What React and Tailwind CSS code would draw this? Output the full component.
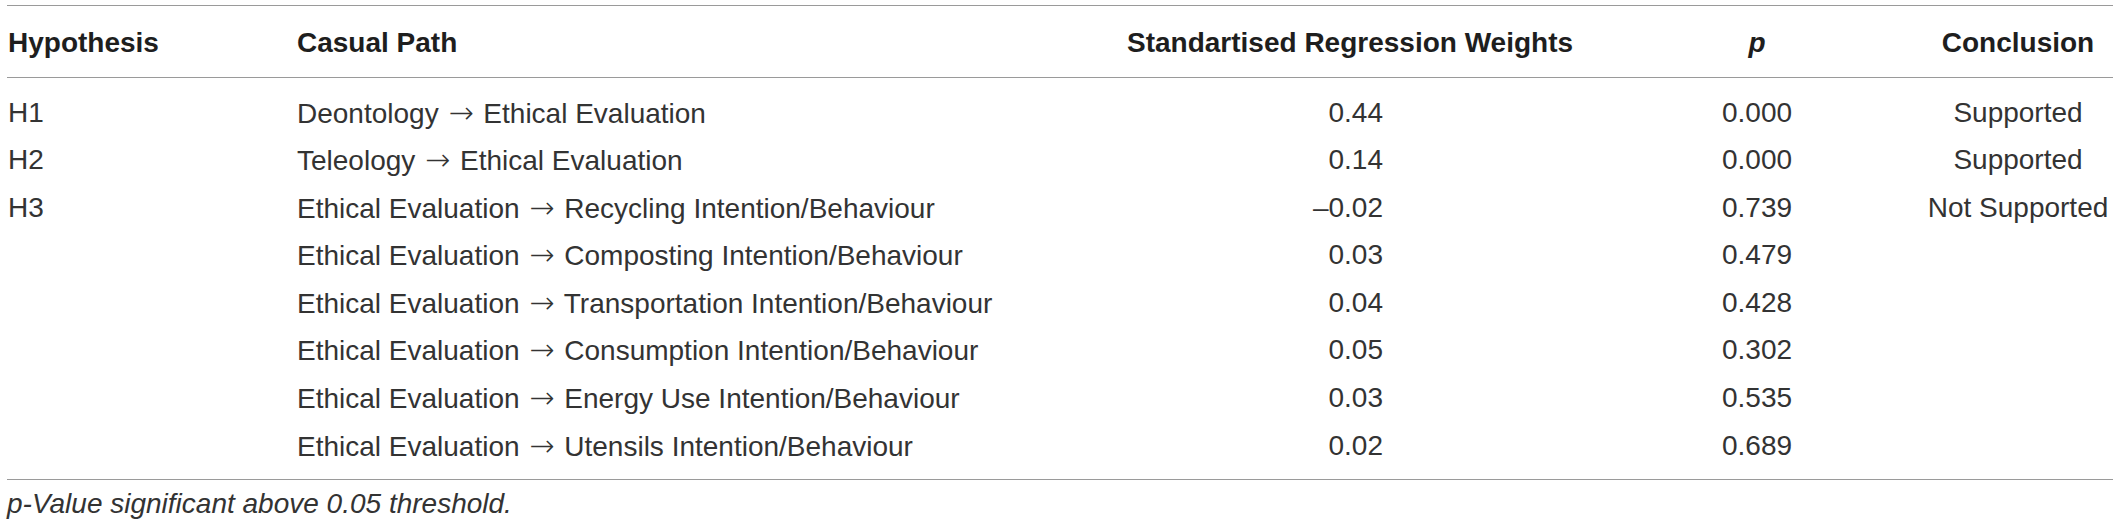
const rows = [
  ["H1", "Deontology", "Ethical Evaluation", "0.44", "0.000", "Supported"],
  ["H2", "Teleology", "Ethical Evaluation", "0.14", "0.000", "Supported"],
  ["H3", "Ethical Evaluation", "Recycling Intention/Behaviour", "–0.02", "0.739", "Not Supported"],
  ["", "Ethical Evaluation", "Composting Intention/Behaviour", "0.03", "0.479", ""],
  ["", "Ethical Evaluation", "Transportation Intention/Behaviour", "0.04", "0.428", ""],
  ["", "Ethical Evaluation", "Consumption Intention/Behaviour", "0.05", "0.302", ""],
  ["", "Ethical Evaluation", "Energy Use Intention/Behaviour", "0.03", "0.535", ""],
  ["", "Ethical Evaluation", "Utensils Intention/Behaviour", "0.02", "0.689", ""],
];

const cols = "grid grid-cols-[289px_830px_446px_368px_154px]";

export default function App() {
  return (
    <div className="bg-white w-[2119px] h-[528px] pt-[5px] pl-[7px] font-['Liberation_Sans',Arial,sans-serif] text-[28px] text-[#333] overflow-hidden">
      <div className="w-[2106px] border-t border-[#9a9a9a]">
        {/* header */}
        <div className={`${cols} h-[72px] pt-[2px] items-center border-b border-[#9a9a9a] pl-[1px] font-bold leading-[32px] text-[#1e1e1e] whitespace-nowrap`}>
          <div>Hypothesis</div>
          <div>Casual Path</div>
          <div>Standartised Regression Weights</div>
          <div className="flex justify-center italic">p</div>
          <div className="flex justify-center">Conclusion</div>
        </div>

        {/* body */}
        <div className="pt-[10.5px] pb-[9.7px] border-b border-[#9a9a9a] pl-[1px]">
          {rows.map((r, i) => (
            <div key={i} className={`${cols} h-[47.6px] leading-[47.6px] whitespace-nowrap`}>
              <div>{r[0]}</div>
              <div>
                {r[1]}{" "}
                <span className="mx-[2px] font-['DejaVu_Sans',sans-serif] font-extralight text-[30px]">→</span>{" "}
                {r[2]}
              </div>
              <div className="w-[256px] text-right">{r[3]}</div>
              <div className="flex justify-center">{r[4]}</div>
              <div className="flex justify-center">{r[5]}</div>
            </div>
          ))}
        </div>

        <p className="mt-[8px] italic leading-[32px] text-[#333]">
          p-Value significant above 0.05 threshold.
        </p>
      </div>
    </div>
  );
}
